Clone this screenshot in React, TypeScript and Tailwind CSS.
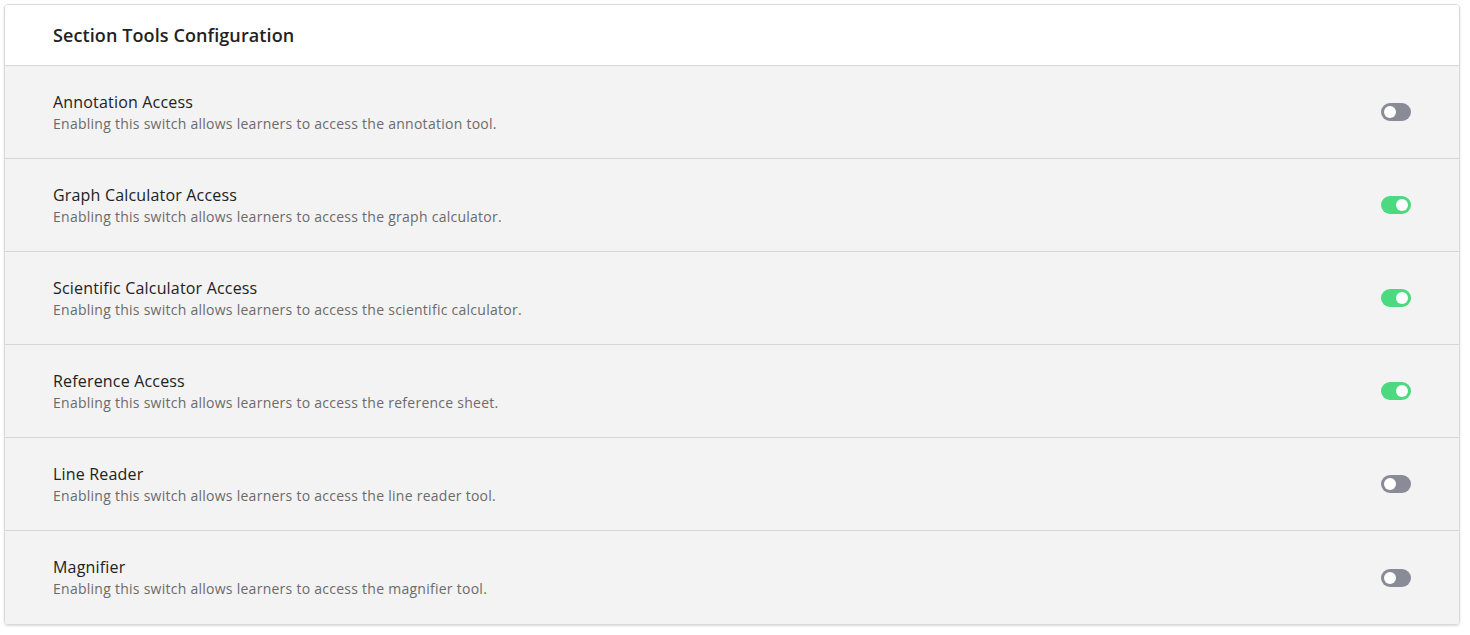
import React, { useState } from 'react';

interface Tool {
  title: string;
  description: string;
  enabled: boolean;
}

const initialTools: Tool[] = [
  { title: 'Annotation Access', description: 'Enabling this switch allows learners to access the annotation tool.', enabled: false },
  { title: 'Graph Calculator Access', description: 'Enabling this switch allows learners to access the graph calculator.', enabled: true },
  { title: 'Scientific Calculator Access', description: 'Enabling this switch allows learners to access the scientific calculator.', enabled: true },
  { title: 'Reference Access', description: 'Enabling this switch allows learners to access the reference sheet.', enabled: true },
  { title: 'Line Reader', description: 'Enabling this switch allows learners to access the line reader tool.', enabled: false },
  { title: 'Magnifier', description: 'Enabling this switch allows learners to access the magnifier tool.', enabled: false },
];

const Toggle: React.FC<{ on: boolean; onClick: () => void; label: string }> = ({ on, onClick, label }) => (
  <button
    onClick={onClick}
    role="switch"
    aria-checked={on}
    aria-label={label}
    className={`relative inline-flex h-[18px] w-[30px] shrink-0 items-center rounded-full transition ${
      on ? 'justify-end bg-[#4cd980]' : 'justify-start bg-[#898c96]'
    }`}
  >
    <span className="mx-[3px] h-[12px] w-[12px] rounded-full bg-white" />
  </button>
);

const App: React.FC = () => {
  const [tools, setTools] = useState(initialTools);

  const toggle = (i: number) =>
    setTools((prev) => prev.map((t, idx) => (idx === i ? { ...t, enabled: !t.enabled } : t)));

  return (
    <div className="min-h-screen bg-white pl-[4px] pt-[4px]" style={{ fontFamily: '"Open Sans", "Liberation Sans", sans-serif' }}>
      <div className="w-[1456px] overflow-hidden rounded-[4px] border border-[#d9d9d9] shadow-[0_1px_2px_rgba(0,0,0,0.15)]">
        <div className="flex h-[61px] items-center border-b border-[#d6d6d6] bg-white px-[48px]">
          <h2 className="text-[18px] font-semibold tracking-[0.1px] text-[#222]">Section Tools Configuration</h2>
        </div>
        {tools.map((tool, i) => (
          <div
            key={tool.title}
            className={`flex h-[93px] items-center justify-between bg-[#f3f3f3] px-[48px] ${
              i < tools.length - 1 ? 'border-b border-[#d6d6d6]' : ''
            }`}
          >
            <div className="flex flex-col">
              <span className="text-[16px] leading-[22px] tracking-[0.18px] text-[#222]">{tool.title}</span>
              <span className="text-[14px] leading-[21px] tracking-[0.26px] text-[#6b6b6b]">{tool.description}</span>
            </div>
            <Toggle on={tool.enabled} onClick={() => toggle(i)} label={tool.title} />
          </div>
        ))}
      </div>
    </div>
  );
};

export default App;
